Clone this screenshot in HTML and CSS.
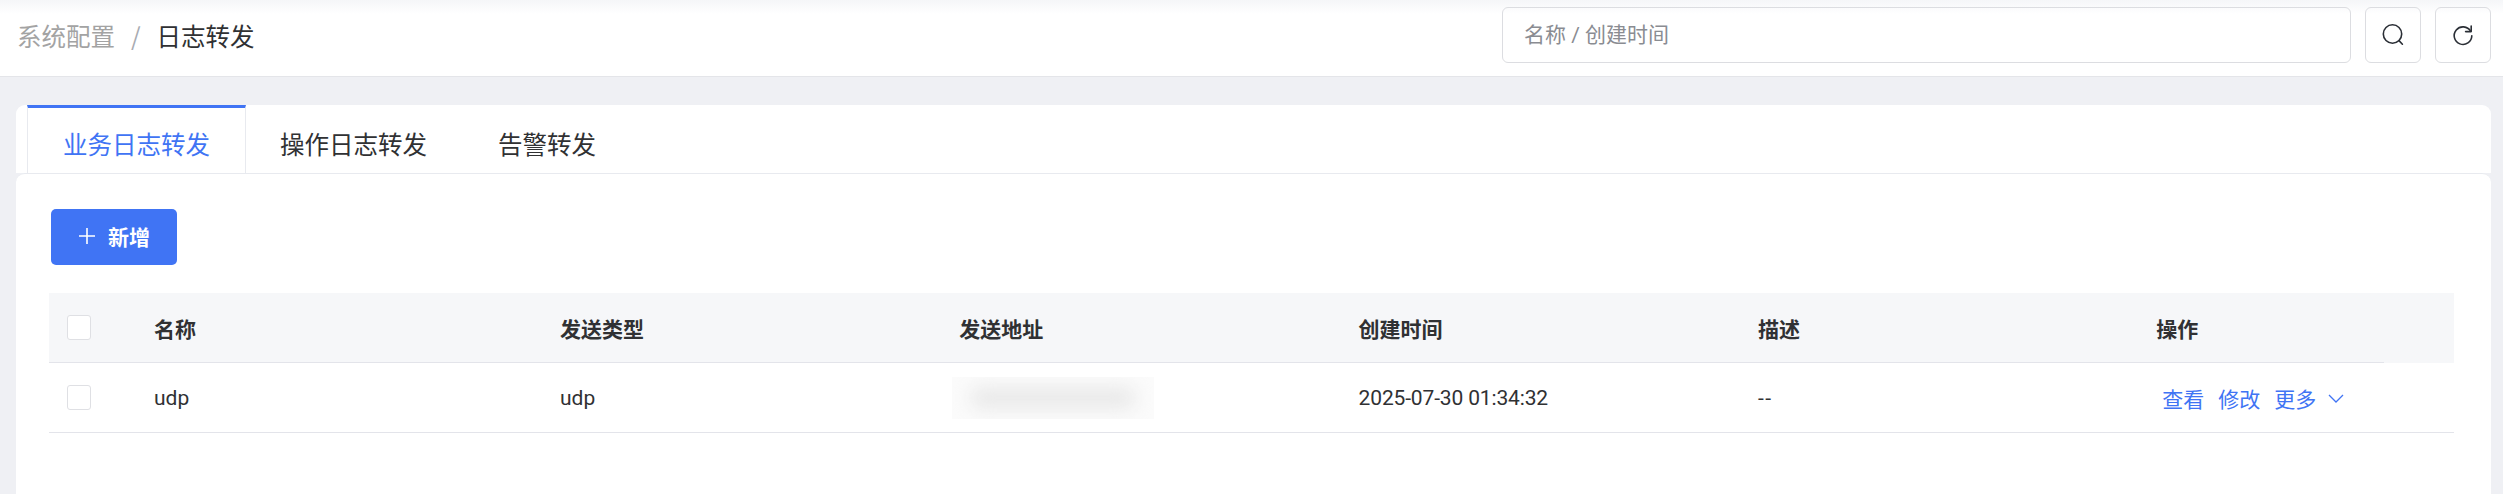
FILE: index.html
```html
<!DOCTYPE html>
<html lang="zh-CN">

<head>
    <meta charset="UTF-8">
    <title>日志转发</title>
    <link rel="stylesheet" href="styles.css">
</head>

<body>
    <div class="topbar">
        <div class="breadcrumb">
            <span class="crumb-parent">系统配置</span>
            <span class="crumb-sep">/</span>
            <span class="crumb-current">日志转发</span>
        </div>
        <div class="search-group">
            <input class="search-input" type="text" placeholder="名称 / 创建时间">
            <button class="icon-btn" aria-label="搜索">
                <svg width="24" height="24" viewBox="0 0 24 24" fill="none" stroke="#2b2f36" stroke-width="1.6">
                    <circle cx="11.5" cy="11" r="9.2" />
                    <path d="M18 17.6l3.4 3.6" stroke-linecap="round" />
                </svg>
            </button>
            <button class="icon-btn" aria-label="刷新">
                <svg width="24" height="24" viewBox="0 0 24 24" fill="none" stroke="#2b2f36" stroke-width="1.6">
                    <path d="M19.6 8.2a8.8 8.8 0 1 0 1.2 4.6" stroke-linecap="round" />
                    <path d="M14.6 8.6h5.6V3" stroke-linejoin="round" stroke-linecap="round" />
                </svg>
            </button>
        </div>
    </div>

    <div class="content">
        <div class="tabs">
            <a class="tab active">业务日志转发</a>
            <a class="tab">操作日志转发</a>
            <a class="tab">告警转发</a>
        </div>
        <div class="panel">
            <button class="btn-add">
                <svg width="18" height="18" viewBox="0 0 18 18" fill="none" stroke="#fff" stroke-width="1.6">
                    <path d="M9 1v16M1 9h16" />
                </svg>
                <span>新增</span>
            </button>

            <table class="data-table">
                <colgroup>
                    <col class="col-check">
                    <col class="col-name">
                    <col class="col-std">
                    <col class="col-std">
                    <col class="col-std">
                    <col class="col-last">
                    <col class="col-ops">
                    <col>
                </colgroup>
                <thead>
                    <tr>
                        <th class="cell-check"><span class="checkbox"></span></th>
                        <th>名称</th>
                        <th>发送类型</th>
                        <th>发送地址</th>
                        <th>创建时间</th>
                        <th>描述</th>
                        <th>操作</th>
                        <th class="cell-gap"></th>
                    </tr>
                </thead>
                <tbody>
                    <tr>
                        <td class="cell-check"><span class="checkbox"></span></td>
                        <td>udp</td>
                        <td>udp</td>
                        <td>
                            <div class="blur-box"><div class="blur-inner"></div></div>
                        </td>
                        <td class="cell-time">2025-07-30 01:34:32</td>
                        <td class="cell-empty">--</td>
                        <td colspan="2">
                            <div class="ops">
                                <a class="link">查看</a>
                                <a class="link">修改</a>
                                <a class="link link-more">更多
                                    <svg width="16" height="10" viewBox="0 0 16 10" fill="none" stroke="#4074f4" stroke-width="1.3">
                                        <path d="M1 1l7 7 7-7" />
                                    </svg>
                                </a>
                            </div>
                        </td>
                    </tr>
                </tbody>
            </table>
        </div>
    </div>
</body>

</html>
```

FILE: styles.css
```css
* {
    box-sizing: border-box;
}

html,
body {
    height: 100%;
}

body {
    margin: 0;
    font-family: Roboto, "Noto Sans CJK SC", sans-serif;
    font-size: 21px;
    color: #303133;
    background: #eff0f4;
    overflow: hidden;
}

.topbar {
    height: 77px;
    padding: 7px 12px 0 17px;
    display: flex;
    justify-content: space-between;
    align-items: flex-start;
    background: linear-gradient(#f5f6f8, #fff 14px);
    border-bottom: 1px solid #e4e5e9;
}

.breadcrumb {
    display: flex;
    align-items: center;
    height: 56px;
    font-size: 24.5px;
    font-family: "Noto Sans CJK SC", sans-serif;
}

.crumb-parent {
    color: #a3a3a3;
}

.crumb-sep {
    margin: 0 16px 0 16px;
    color: #a8abb2;
}

.crumb-current {
    color: #303133;
}

.search-group {
    display: flex;
    gap: 14px;
}

.search-input {
    width: 849px;
    height: 56px;
    padding: 0 21px;
    border: 1px solid #dcdde1;
    border-radius: 6px;
    font-family: inherit;
    font-size: 21px;
    background: transparent;
    outline: none;
}

.search-input::placeholder {
    color: #8a8c92;
}

.icon-btn {
    width: 56px;
    height: 56px;
    padding: 0;
    display: flex;
    align-items: center;
    justify-content: center;
    border: 1px solid #dcdde1;
    border-radius: 6px;
    background: transparent;
}

.content {
    margin: 28px 12px 0 16px;
}

.tabs {
    height: 68px;
    padding-left: 11px;
    display: flex;
    background: #fff;
    border-radius: 9px 9px 0 0;
}

.tab {
    height: 68px;
    padding: 0 37px 0 34px;
    font-size: 24.5px;
    line-height: 78px;
    font-family: "Noto Sans CJK SC", sans-serif;
    color: #303133;
}

.tab.active {
    width: 219px;
    padding: 0 0 0 35px;
    color: #4074f4;
    border-top: 3px solid #4074f4;
    border-left: 1px solid #e8eaef;
    border-right: 1px solid #e8eaef;
    line-height: 72px;
}

.panel {
    height: 330px;
    padding: 35px 37px 0 33px;
    background: #fff;
    border-top: 1px solid #e8eaef;
    border-radius: 9px;
}

.btn-add {
    width: 126px;
    height: 56px;
    padding: 0 0 3px;
    margin-left: 2px;
    display: flex;
    align-items: center;
    justify-content: center;
    gap: 12px;
    border: none;
    border-radius: 5px;
    color: #fff;
    background: #4074f4;
    font-family: "Noto Sans CJK SC", sans-serif;
    font-size: 21px;
    font-weight: 700;
}

.data-table {
    width: 2405px;
    margin-top: 28px;
    table-layout: fixed;
    border-collapse: separate;
    border-spacing: 0;
}

.col-check {
    width: 105px;
}

.col-name {
    width: 406px;
}

.col-std {
    width: 399.3px;
}

.col-last {
    width: 398.3px;
}

.col-ops {
    width: 228px;
}

.data-table th {
    height: 70px;
    padding: 0;
    text-align: left;
    font-weight: 700;
    background: #f6f7f9;
    border-bottom: 1px solid #e3e4ea;
}

.data-table th.cell-gap {
    border-bottom-color: #f6f7f9;
}

.data-table td {
    height: 70px;
    padding: 0;
    border-bottom: 1px solid #e3e4ea;
}

.data-table .cell-check {
    padding-left: 18px;
}

.data-table .cell-time {
    letter-spacing: -0.15px;
}

.data-table .cell-empty {
    letter-spacing: 1.5px;
}

.checkbox {
    display: block;
    width: 24px;
    height: 25px;
    background: #fff;
    border: 1px solid #dfe0e4;
    border-radius: 3px;
}

.blur-box {
    width: 202px;
    height: 42px;
    margin-left: -7px;
    overflow: hidden;
    background: #fbfbfb;
}

.blur-inner {
    width: 166px;
    height: 22px;
    margin: 10px 0 0 18px;
    background: #e9e9e9;
    border-radius: 11px;
    filter: blur(9px);
}

.ops {
    display: flex;
    align-items: center;
    gap: 14px;
    padding-left: 6px;
}

.link {
    color: #4074f4;
}

.link-more {
    display: flex;
    align-items: center;
    gap: 12px;
}

.link-more svg {
    margin-top: 2px;
}
```
